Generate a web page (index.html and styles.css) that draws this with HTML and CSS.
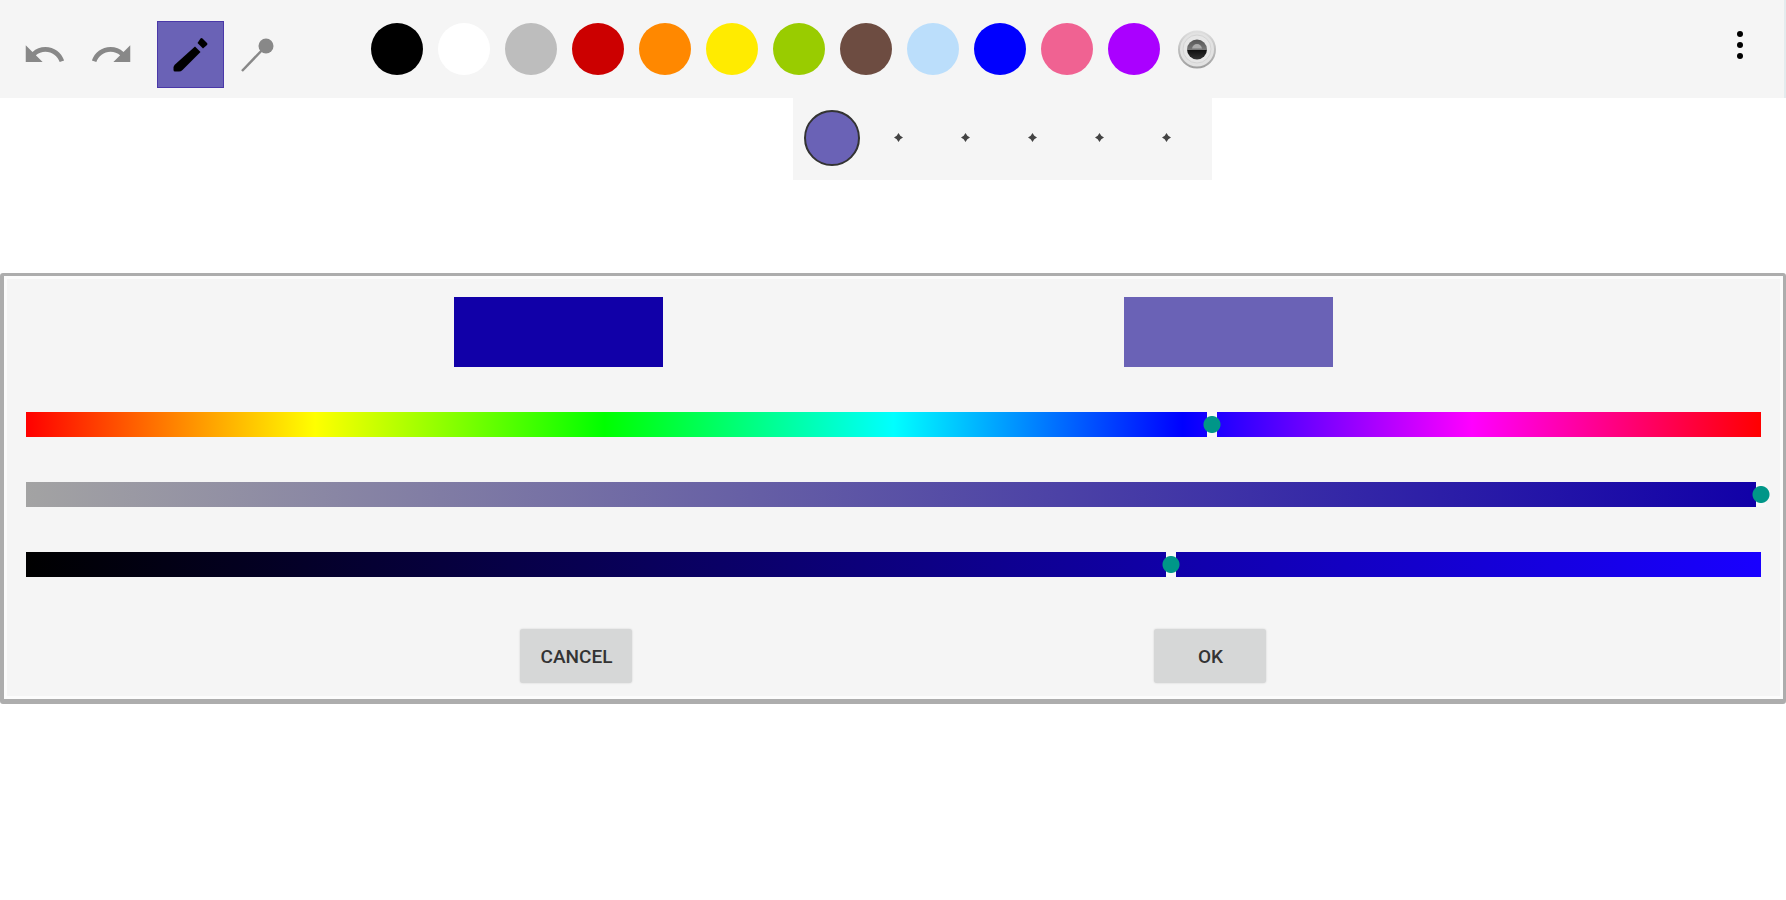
FILE: index.html
```html
<!DOCTYPE html>
<html lang="en">
<head>
    <meta charset="UTF-8">
    <meta name="viewport" content="width=device-width, initial-scale=1.0">
    <title>Drawing</title>
    <link rel="stylesheet" href="styles.css">
</head>
<body>
    <header class="toolbar">
        <div class="tools">
            <button class="tool" aria-label="Undo">
                <svg width="45" height="45" viewBox="0 0 24 24"><path fill="#888" d="M12.5 8c-2.65 0-5.05.99-6.9 2.6L2 7v9h9l-3.62-3.62c1.39-1.16 3.16-1.88 5.12-1.88 3.54 0 6.55 2.31 7.6 5.5l2.37-.78C21.08 11.03 17.15 8 12.5 8z"/></svg>
            </button>
            <button class="tool" aria-label="Redo">
                <svg width="45" height="45" viewBox="0 0 24 24"><path fill="#888" d="M18.4 10.6C16.55 8.99 14.15 8 11.5 8c-4.65 0-8.58 3.03-9.96 7.22L3.9 16c1.05-3.19 4.05-5.5 7.6-5.5 1.95 0 3.73.72 5.12 1.88L13 16h9V7l-3.6 3.6z"/></svg>
            </button>
            <button class="tool tool-active" aria-label="Pencil">
                <svg width="67" height="67" viewBox="0 0 67 67">
                    <path d="M38 25.500L43.500 31L25.500 49Q24 50.500 22 50.500H18Q16.500 50.500 16.500 49V46.500Q16.500 45 18 43.500Z"/>
                    <path d="M40.500 22L43.500 17.500Q44.500 16.500 45.500 17.500L50 22Q51 23 50 24L46 27.500Z"/>
                </svg>
            </button>
            <button class="tool" aria-label="Width">
                <svg width="67" height="67" viewBox="0 0 67 67">
                    <path d="M42 25L18 50" stroke="#888" stroke-width="2.500"/>
                    <circle cx="42" cy="25" r="7.500" fill="#888"/>
                </svg>
            </button>
        </div>

        <div class="colors">
            <button class="color black" aria-label="Black"></button>
            <button class="color white" aria-label="White"></button>
            <button class="color gray" aria-label="Gray"></button>
            <button class="color red" aria-label="Red"></button>
            <button class="color orange" aria-label="Orange"></button>
            <button class="color yellow" aria-label="Yellow"></button>
            <button class="color green" aria-label="Green"></button>
            <button class="color brown" aria-label="Brown"></button>
            <button class="color sky" aria-label="Light blue"></button>
            <button class="color blue" aria-label="Blue"></button>
            <button class="color pink" aria-label="Pink"></button>
            <button class="color purple" aria-label="Purple"></button>
            <button class="more-colors" aria-label="More colors">
                <svg width="44" height="44" viewBox="0 0 44 44">
                    <defs>
                        <linearGradient id="rim" x1="0" y1="0" x2="0" y2="1">
                            <stop offset="0" stop-color="#dedede"/>
                            <stop offset="1" stop-color="#a0a0a0"/>
                        </linearGradient>
                        <linearGradient id="knob" x1="0" y1="0" x2="0" y2="1">
                            <stop offset="0" stop-color="#555"/>
                            <stop offset=".5" stop-color="#777"/>
                            <stop offset=".55" stop-color="#111"/>
                            <stop offset="1" stop-color="#333"/>
                        </linearGradient>
                    </defs>
                    <circle cx="22" cy="22.500" r="18" fill="#e2e2e2" stroke="url(#rim)" stroke-width="2"/>
                    <circle cx="22" cy="22" r="14" fill="#e6e6e6" stroke="#d4d4d4"/>
                    <circle cx="22" cy="22.500" r="10" fill="url(#knob)"/>
                    <path d="M17 21.500Q18 17 22 17Q26 17 27 21.500Z" fill="#aaa"/>
                </svg>
            </button>

            <div class="palette">
                <button class="slot" aria-label="Custom color 1"><span class="custom"></span></button>
                <button class="slot" aria-label="Add color 2"><svg class="plus" viewBox="0 0 10 10"><path d="M5 0L7 3L10 5L7 7L5 10L3 7L0 5L3 3Z"/></svg></button>
                <button class="slot" aria-label="Add color 3"><svg class="plus" viewBox="0 0 10 10"><path d="M5 0L7 3L10 5L7 7L5 10L3 7L0 5L3 3Z"/></svg></button>
                <button class="slot" aria-label="Add color 4"><svg class="plus" viewBox="0 0 10 10"><path d="M5 0L7 3L10 5L7 7L5 10L3 7L0 5L3 3Z"/></svg></button>
                <button class="slot" aria-label="Add color 5"><svg class="plus" viewBox="0 0 10 10"><path d="M5 0L7 3L10 5L7 7L5 10L3 7L0 5L3 3Z"/></svg></button>
                <button class="slot" aria-label="Add color 6"><svg class="plus" viewBox="0 0 10 10"><path d="M5 0L7 3L10 5L7 7L5 10L3 7L0 5L3 3Z"/></svg></button>
            </div>
        </div>

        <button class="menu" aria-label="Menu">
            <svg width="8" height="30" viewBox="0 0 8 30">
                <circle cx="4" cy="4" r="3"/>
                <circle cx="4" cy="15" r="3"/>
                <circle cx="4" cy="26" r="3"/>
            </svg>
        </button>
    </header>

    <main class="page">
        <form class="picker">
            <div class="previews">
                <div class="preview preview-new"></div>
                <div class="preview preview-old"></div>
            </div>
            <div class="sliders">
                <input class="slider hue" type="range" min="0" max="360" value="246" aria-label="Hue">
                <input class="slider saturation" type="range" min="0" max="100" value="100" aria-label="Saturation">
                <input class="slider brightness" type="range" min="0" max="100" value="66" aria-label="Brightness">
            </div>
            <div class="actions">
                <button class="action" type="button">CANCEL</button>
                <button class="action" type="button">OK</button>
            </div>
        </form>
    </main>
</body>
</html>
```
FILE: styles.css
```css
* {
    box-sizing: border-box;
}
body {
    margin: 0;
    background: #fff;
    font-family: Roboto, sans-serif;
}
button {
    padding: 0;
    border: none;
    background: none;
    cursor: pointer;
}
svg {
    display: block;
}

/* Toolbar */
.toolbar {
    display: flex;
    align-items: center;
    height: 98px;
    background: #f5f5f5;
    border-right: 2px solid #e4ecee;
}
.tools {
    display: flex;
    align-self: flex-end;
    padding: 0 0 10px 11px;
}
.tool {
    display: flex;
    align-items: center;
    justify-content: center;
    width: 67px;
    height: 67px;
}
.tool-active {
    margin-left: 12px;
    background: #6a62b6;
    box-shadow: inset 0 0 0 1px #4a38a8;
}
.colors {
    position: relative;
    display: flex;
    align-items: center;
    gap: 15px;
    margin-left: 80px;
}
.color {
    width: 52px;
    height: 52px;
    border-radius: 50%;
}
.black { background: #000; }
.white { background: #fff; }
.gray { background: #bdbdbd; }
.red { background: #c00; }
.orange { background: #f80; }
.yellow { background: #ffeb00; }
.green { background: #9c0; }
.brown { background: #6d4c41; }
.sky { background: #bbdefb; }
.blue { background: #00f; }
.pink { background: #f06292; }
.purple { background: #a0f; }
.menu {
    align-self: flex-start;
    height: 90px;
    margin-left: auto;
    padding: 0 40px;
}

/* Custom colors below the toolbar */
.palette {
    position: absolute;
    top: 75px;
    right: 7px;
    display: flex;
    padding: 6px 12px 9px 5px;
    background: #f5f5f5;
}
.slot {
    display: flex;
    align-items: center;
    justify-content: center;
    width: 67px;
    height: 67px;
}
.custom {
    width: 56px;
    height: 56px;
    border: 2px solid #333;
    border-radius: 50%;
    background: #6a62b6;
}
.plus {
    width: 9px;
    height: 9px;
    fill: #444;
}

/* Color picker */
.page {
    padding-top: 175px;
}
.picker {
    padding: 21px 13px 16px;
    background: #f5f5f5;
    border: 3px solid #adadad;
    border-width: 3px 3px 5px 4px;
    border-radius: 3px;
    box-shadow: inset 0 0 0 3px #fcfcfc;
}
.previews {
    display: flex;
    justify-content: space-around;
    width: 75vw;
    margin: 0 auto 45px;
}
.preview {
    width: 209px;
    height: 70px;
}
.preview-new {
    background: #1100a8;
}
.preview-old {
    background: #6a62b6;
}
.sliders {
    display: flex;
    flex-direction: column;
    gap: 45px;
}
.slider {
    -webkit-appearance: none;
    appearance: none;
    width: 100%;
    height: 25px;
    margin: 0;
    /* track ends sit under the middle of the thumb */
    background-color: transparent;
    background-position: center;
    background-size: calc(100% - 18px) 100%;
    background-repeat: no-repeat;
}
.slider::-webkit-slider-thumb {
    -webkit-appearance: none;
    width: 18px;
    height: 25px;
    background:
        radial-gradient(circle, #009688 8px, transparent 9px),
        linear-gradient(#f8f8f8, #f8f8f8) center / 10px 100% no-repeat;
}
.hue {
    background-image: linear-gradient(to right, #f00, #ff0, #0f0, #0ff, #00f, #f0f, #f00);
}
.saturation {
    background-image: linear-gradient(to right, #a3a3a3, #1100a8);
}
.brightness {
    background-image: linear-gradient(to right, #000, #1900ff);
}
.actions {
    display: flex;
    justify-content: space-around;
    width: 71vw;
    margin: 52px auto 0;
}
.action {
    width: 112px;
    height: 54px;
    border-radius: 3px;
    background: #d6d7d7;
    box-shadow: 0 0 2px #ccc;
    color: #333;
    font-family: Roboto, sans-serif;
    font-size: 19px;
    font-weight: 500;
}
```
